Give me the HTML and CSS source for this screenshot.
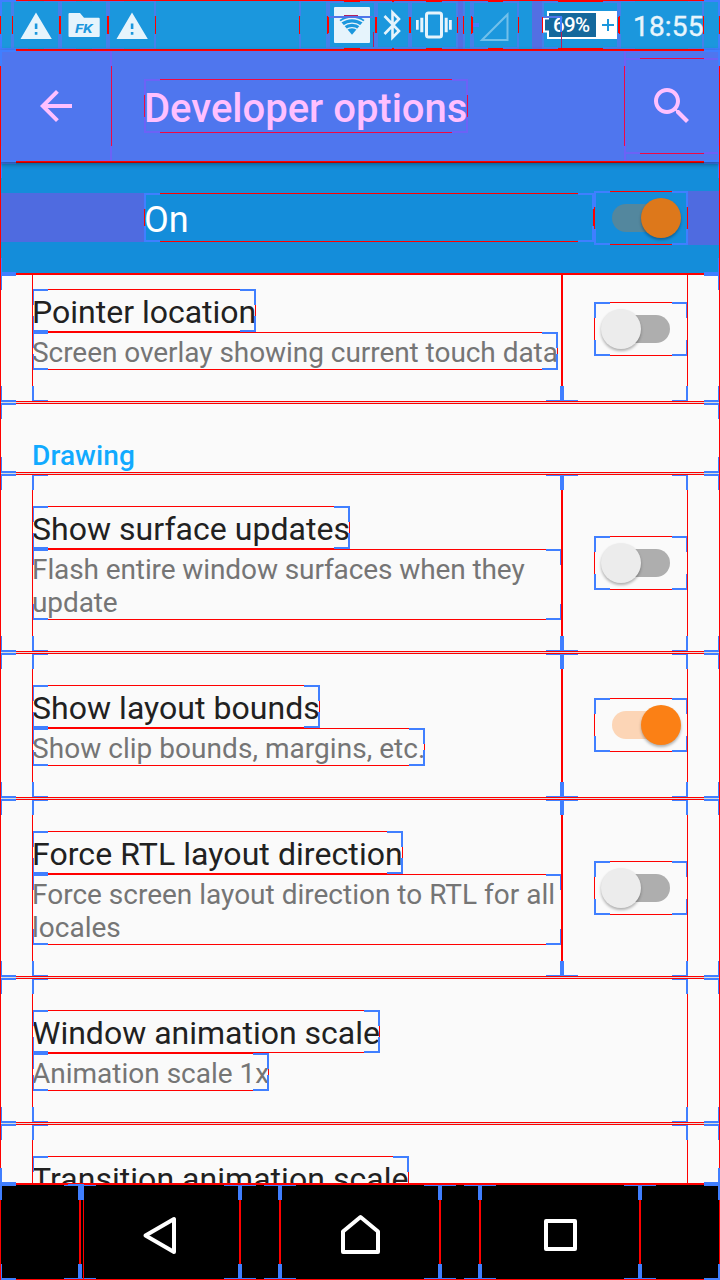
FILE: index.html
```html
<!DOCTYPE html>
<html lang="en">
<head>
<meta charset="utf-8">
<title>Developer options</title>
<link rel="stylesheet" href="styles.css">
</head>
<body>
<div class="screen">
  <header class="status bounds">
    <div class="slot pad-start bounds"></div>
    <div class="slot icon-slot bounds"><svg width="48" height="50"><path fill="#e6f4fc" fill-rule="evenodd" d="M24 12.5L39.8 39H8.5ZM22.8 23.5v5.5h2.6v-5.5ZM22.8 32v2.8h2.6V32Z"/></svg></div>
    <div class="slot icon-slot bounds"><svg width="48" height="50"><path fill="#e6f4fc" d="M9.5 13H20l4 4.7h14.7q1 0 1 1V36q0 1-1 1H9.5q-1 0-1-1V14q0-1 1-1Z"/><text class="folder-mark" x="15" y="32.500" textLength="17.500" lengthAdjust="spacingAndGlyphs">FK</text></svg></div>
    <div class="slot icon-slot bounds"><svg width="48" height="50"><path fill="#e6f4fc" fill-rule="evenodd" d="M24 12.500L39.800 39H8.500ZM22.800 23.500v5.500h2.600v-5.500ZM22.800 32v2.800h2.600V32Z"/></svg></div>
    <div class="gap-flex"></div>
    <div class="slot lead bounds"></div>
    <div class="slot inset icon-slot bounds"><svg width="48" height="50"><rect x="6" y="7" width="36" height="36" rx="1" fill="#e6f4fc"/><path fill="#1b97dd" d="M24 34.700L11.500 20Q24 11 36.500 20Z"/><g fill="none" stroke="#e6f4fc" stroke-width="1.400"><path d="M12 22.500Q24 14.500 36 22.500"/><path d="M15 26.300Q24 20 33 26.300"/><path d="M18 29.800Q24 25.500 30 29.800"/></g><path fill="#4f76ea" d="M2 16h43v2H2z"/><path fill="#b02060" d="M16 15h14v1H16zM45 32h1v15h-1z"/></svg></div>
    <div class="slot inset bt bounds"><svg width="34" height="50"><path fill="none" stroke="#e6f4fc" stroke-width="2.600" d="M8.500 16L23 31L16.500 37.500V12.500L23 19L8.500 34"/></svg></div>
    <div class="slot inset icon-slot bounds"><svg width="48" height="50"><rect x="16.500" y="13" width="15" height="24" rx="2" fill="none" stroke="#e6f4fc" stroke-width="3"/><path fill="#e6f4fc" d="M10.300 17.700h3v14.600h-3zM6 20h2.700v9.700H6zM34.700 17.700h3v14.600h-3zM39 20h2.800v9.700H39z"/></svg></div>
    <div class="tint tint-a"></div>
    <div class="slot stub bounds"></div>
    <div class="slot inset signal bounds"><svg width="47" height="50"><path fill="none" stroke="#72c0eb" stroke-width="2" d="M10 40L35.500 14.500V40Z"/><path fill="#407fff" d="M0 23h7v4H0z"/></svg></div>
    <div class="gap-b"></div>
    <div class="tint tint-b"></div>
    <div class="slot inset battery bounds"><svg width="77" height="50"><path fill="#14689c" stroke="#fff" stroke-width="2" d="M6 12H55V38H6V31.500H2V18.500H6Z"/><path fill="#fff" d="M56 11h19v28H56z"/><path stroke="#1b97dd" stroke-width="2" d="M60 25h12M66 19v12"/><text class="charge" x="11" y="32" textLength="37">69%</text><path fill="#4f76ea" d="M0 16h20v2H0z"/><path fill="#407fff" d="M18 16h2v16h-2z"/><path fill="#b02060" d="M19 32h1v16h-1z"/></svg></div>
    <div class="slot clock bounds">18:55</div>
    <div class="slot pad-end"></div>
  </header>

  <main class="app bounds">
    <div class="toolbar bounds">
      <div class="nav-btn bounds"><svg width="48" height="48" viewBox="0 0 24 24"><path fill="#ffc0ff" d="M20 11H7.830l5.590-5.590L12 4l-8 8 8 8 1.410-1.410L7.830 13H20v-2z"/></svg></div>
      <h1 class="bounds">Developer options</h1>
      <div class="menu bounds"><div class="menu-btn bounds"><svg width="48" height="48" viewBox="0 0 24 24"><path fill="#ffc0ff" d="M15.500 14h-.79l-.28-.27C15.410 12.590 16 11.110 16 9.500 16 5.910 13.090 3 9.500 3S3 5.910 3 9.500 5.910 16 9.500 16c1.610 0 3.090-.59 4.230-1.570l.27.28v.79l5 4.990L20.490 19l-4.990-5zm-6 0C7.010 14 5 11.990 5 9.500S7.010 5 9.500 5 14 7.010 14 9.500 11.990 14 9.500 14z"/></svg></div></div>
    </div>

    <div class="switchbar bounds">
      <div class="margin-start"></div>
      <div class="state bounds">On</div>
      <div class="switch on bounds"><i class="track"></i><i class="thumb"></i></div>
      <div class="margin-end"></div>
    </div>

    <div class="list bounds">
      <section class="item first bounds">
        <div class="texts bounds"><div class="title bounds">Pointer location</div><div class="summary snug bounds">Screen overlay showing current touch data</div></div>
        <div class="widget bounds"><div class="switch bounds"><i class="track"></i><i class="thumb"></i></div></div>
      </section>
      <h2 class="category bounds">Drawing</h2>
      <section class="item bounds">
        <div class="texts bounds"><div class="title loose bounds">Show surface updates</div><div class="summary full tight bounds">Flash entire window surfaces when they<br>update</div></div>
        <div class="widget bounds"><div class="switch bounds"><i class="track"></i><i class="thumb"></i></div></div>
      </section>
      <section class="item bounds">
        <div class="texts bounds"><div class="title loose bounds">Show layout bounds</div><div class="summary loose bounds">Show clip bounds, margins, etc.</div></div>
        <div class="widget bounds"><div class="switch on bounds"><i class="track"></i><i class="thumb"></i></div></div>
      </section>
      <section class="item bounds">
        <div class="texts bounds"><div class="title looser bounds">Force RTL layout direction</div><div class="summary full bounds">Force screen layout direction to RTL for all<br>locales</div></div>
        <div class="widget bounds"><div class="switch bounds"><i class="track"></i><i class="thumb"></i></div></div>
      </section>
      <section class="item bounds">
        <div class="texts bounds"><div class="title bounds">Window animation scale</div><div class="summary bounds">Animation scale 1x</div></div>
      </section>
      <section class="item last bounds">
        <div class="texts bounds"><div class="title loose bounds">Transition animation scale</div></div>
      </section>
    </div>
  </main>

  <nav class="navbar bounds">
    <div class="side bounds"><div class="hidden-key bounds"></div></div>
    <div class="key bounds"><svg width="160" height="96"><path d="M65.500 51.500L94 35V68Z"/></svg></div>
    <div class="between bounds"></div>
    <div class="key bounds"><svg width="160" height="96"><path d="M63 68V47.500L80.500 33L98 47.500V68Z"/></svg></div>
    <div class="between bounds"></div>
    <div class="key bounds"><svg width="160" height="96"><path d="M66 37H95V65H66Z"/></svg></div>
    <div class="side bounds"></div>
  </nav>
</div>
</body>
</html>
```

FILE: styles.css
```css
* { box-sizing: border-box; }

body {
  margin: 0;
  font-family: Roboto, "Liberation Sans", sans-serif;
}

.screen {
  width: 720px;
  height: 1280px;
  overflow: hidden;
  display: flex;
  flex-direction: column;
  background: #fafafa;
  --line: #f00;
  --corner: #407fff;
}

svg { display: block; }

/* Debug outline: thin frame with thick corner marks */
.bounds { position: relative; }

.bounds::after {
  content: "";
  position: absolute;
  inset: 0;
  pointer-events: none;
  --c: linear-gradient(var(--corner), var(--corner));
  --r: linear-gradient(var(--line), var(--line));
  background:
    var(--c) 0 0 / 16px 2px, var(--c) 0 0 / 2px 16px,
    var(--c) 100% 0 / 16px 2px, var(--c) 100% 0 / 2px 16px,
    var(--c) 0 100% / 16px 2px, var(--c) 0 100% / 2px 16px,
    var(--c) 100% 100% / 16px 2px, var(--c) 100% 100% / 2px 16px,
    var(--r) 0 0 / 100% 1px, var(--r) 0 100% / 100% 1px,
    var(--r) 0 0 / 1px 100%, var(--r) 100% 0 / 1px 100%;
  background-repeat: no-repeat;
}

/* Status bar */
.status {
  height: 50px;
  flex: none;
  display: flex;
  background: #1b97dd;
}
.slot {
  flex: none;
  height: 50px;
  --corner: #4680ea;
}
.inset::after { inset: 1px 0; }
.pad-start { width: 13px; margin-right: -1px; }
.icon-slot { width: 48px; }
.gap-flex { flex: 1; }
.lead { width: 29px; }
.bt { width: 34px; }
.tint { background: #536fe3; }
.tint-a { width: 5px; }
.stub { width: 9px; }
.signal { width: 47px; }
.gap-b { width: 13px; }
.tint-b { width: 10px; }
.battery { width: 77px; }
.clock {
  width: 85px;
  padding-left: 14px;
  font-size: 28px;
  line-height: 53px;
  letter-spacing: 0.2px;
  color: #e8f5fc;
  -webkit-text-stroke: 0.4px #e8f5fc;
}
.pad-end { width: 16px; }
.folder-mark {
  font: italic 700 13px Roboto, sans-serif;
  fill: #1b97dd;
}
.charge {
  font: 500 20.5px Roboto, sans-serif;
  fill: #fff;
}

/* Toolbar */
.app {
  flex: none;
  height: 1134px;
  display: flex;
  flex-direction: column;
}
.app::after { z-index: 2; }
.toolbar {
  height: 112px;
  flex: none;
  display: flex;
  align-items: center;
  background: #4f76ee;
  z-index: 1;
  box-shadow: 0 2px 5px rgba(0, 0, 0, 0.4);
}
.toolbar .bounds {
  --line: #f00844;
  --corner: #6c62f6;
}
.nav-btn {
  width: 112px;
  height: 112px;
  padding: 32px;
}
.toolbar h1 {
  margin: 0 auto 0 32px;
  width: 324px;
  height: 54px;
  padding-top: 6px;
  font-size: 40px;
  line-height: 47px;
  font-weight: 500;
  white-space: nowrap;
  color: #ffc0ff;
}
.menu {
  width: 96px;
  height: 112px;
  padding: 8px 0;
}
.menu-btn { height: 96px; padding: 24px; }

/* Main switch */
.switchbar {
  height: 112px;
  flex: none;
  display: flex;
  align-items: center;
  background: #148dda;
}
.margin-start {
  width: 144px;
  height: 49px;
  margin-top: -1px;
  background: #4f6be0;
}
.state {
  flex: 1;
  height: 49px;
  margin-top: -1px;
  padding-top: 6px;
  font-size: 36px;
  line-height: 42px;
  color: #fff;
}
.margin-end {
  width: 32px;
  height: 54px;
  background: #4f6be0;
}

/* Switch control */
.switch {
  flex: none;
  width: 94px;
  height: 54px;
}
.track {
  position: absolute;
  left: 18px;
  top: 13px;
  width: 58px;
  height: 28px;
  border-radius: 14px;
  background: #aeaeae;
}
.thumb {
  position: absolute;
  left: 7px;
  top: 7px;
  width: 40px;
  height: 40px;
  border-radius: 50%;
  background: #ececec;
  box-shadow: 0 2px 3px rgba(0, 0, 0, 0.3);
}
.on .track { background: #fcd5b6; }
.on .thumb { left: 47px; background: #fb8015; }
.switchbar .track { background: #53879e; }
.switchbar .thumb { background: #dd781b; }

/* Preference list */
.list {
  flex: 1;
  min-height: 0;
  overflow: hidden;
  background: #fafafa;
}
.item {
  display: flex;
  padding: 0 32px;
  margin-bottom: 1px;
  box-shadow: 0 1px #ddd;
}
.first { margin-top: -17px; }
.last { height: 145px; }
.texts {
  flex: 1;
  display: flex;
  flex-direction: column;
  align-items: flex-start;
  padding: 32px 0;
}
.title {
  height: 43px;
  padding-top: 4px;
  font-size: 32px;
  line-height: 38px;
  white-space: nowrap;
  color: #212121;
}
.summary {
  padding: 4px 0 1px;
  font-size: 28px;
  line-height: 33px;
  white-space: nowrap;
  color: #757575;
}
.full { width: 100%; }
.snug { letter-spacing: -0.05px; }
.tight { letter-spacing: -0.1px; }
.loose { letter-spacing: 0.04px; }
.looser { letter-spacing: 0.07px; }
.widget {
  width: 126px;
  display: flex;
  align-items: flex-start;
  padding: 45px 0 0 32px;
}
.item:has(.full) .widget { padding-top: 62px; }
.category {
  margin: 0 0 1px;
  height: 70px;
  padding: 36px 32px 0;
  font-size: 28px;
  line-height: 33px;
  font-weight: 500;
  letter-spacing: 0.1px;
  color: #11aaff;
  box-shadow: 0 1px #ddd;
}

/* Navigation bar */
.navbar {
  flex: none;
  height: 96px;
  display: flex;
  background: #000;
}
.side { width: 80px; }
.key { width: 160px; }
.between { width: 40px; }
.hidden-key {
  width: 84px;
  height: 112px;
  z-index: 1;
}
.key path {
  fill: none;
  stroke: #fff;
  stroke-width: 4;
  stroke-linejoin: round;
}
```
